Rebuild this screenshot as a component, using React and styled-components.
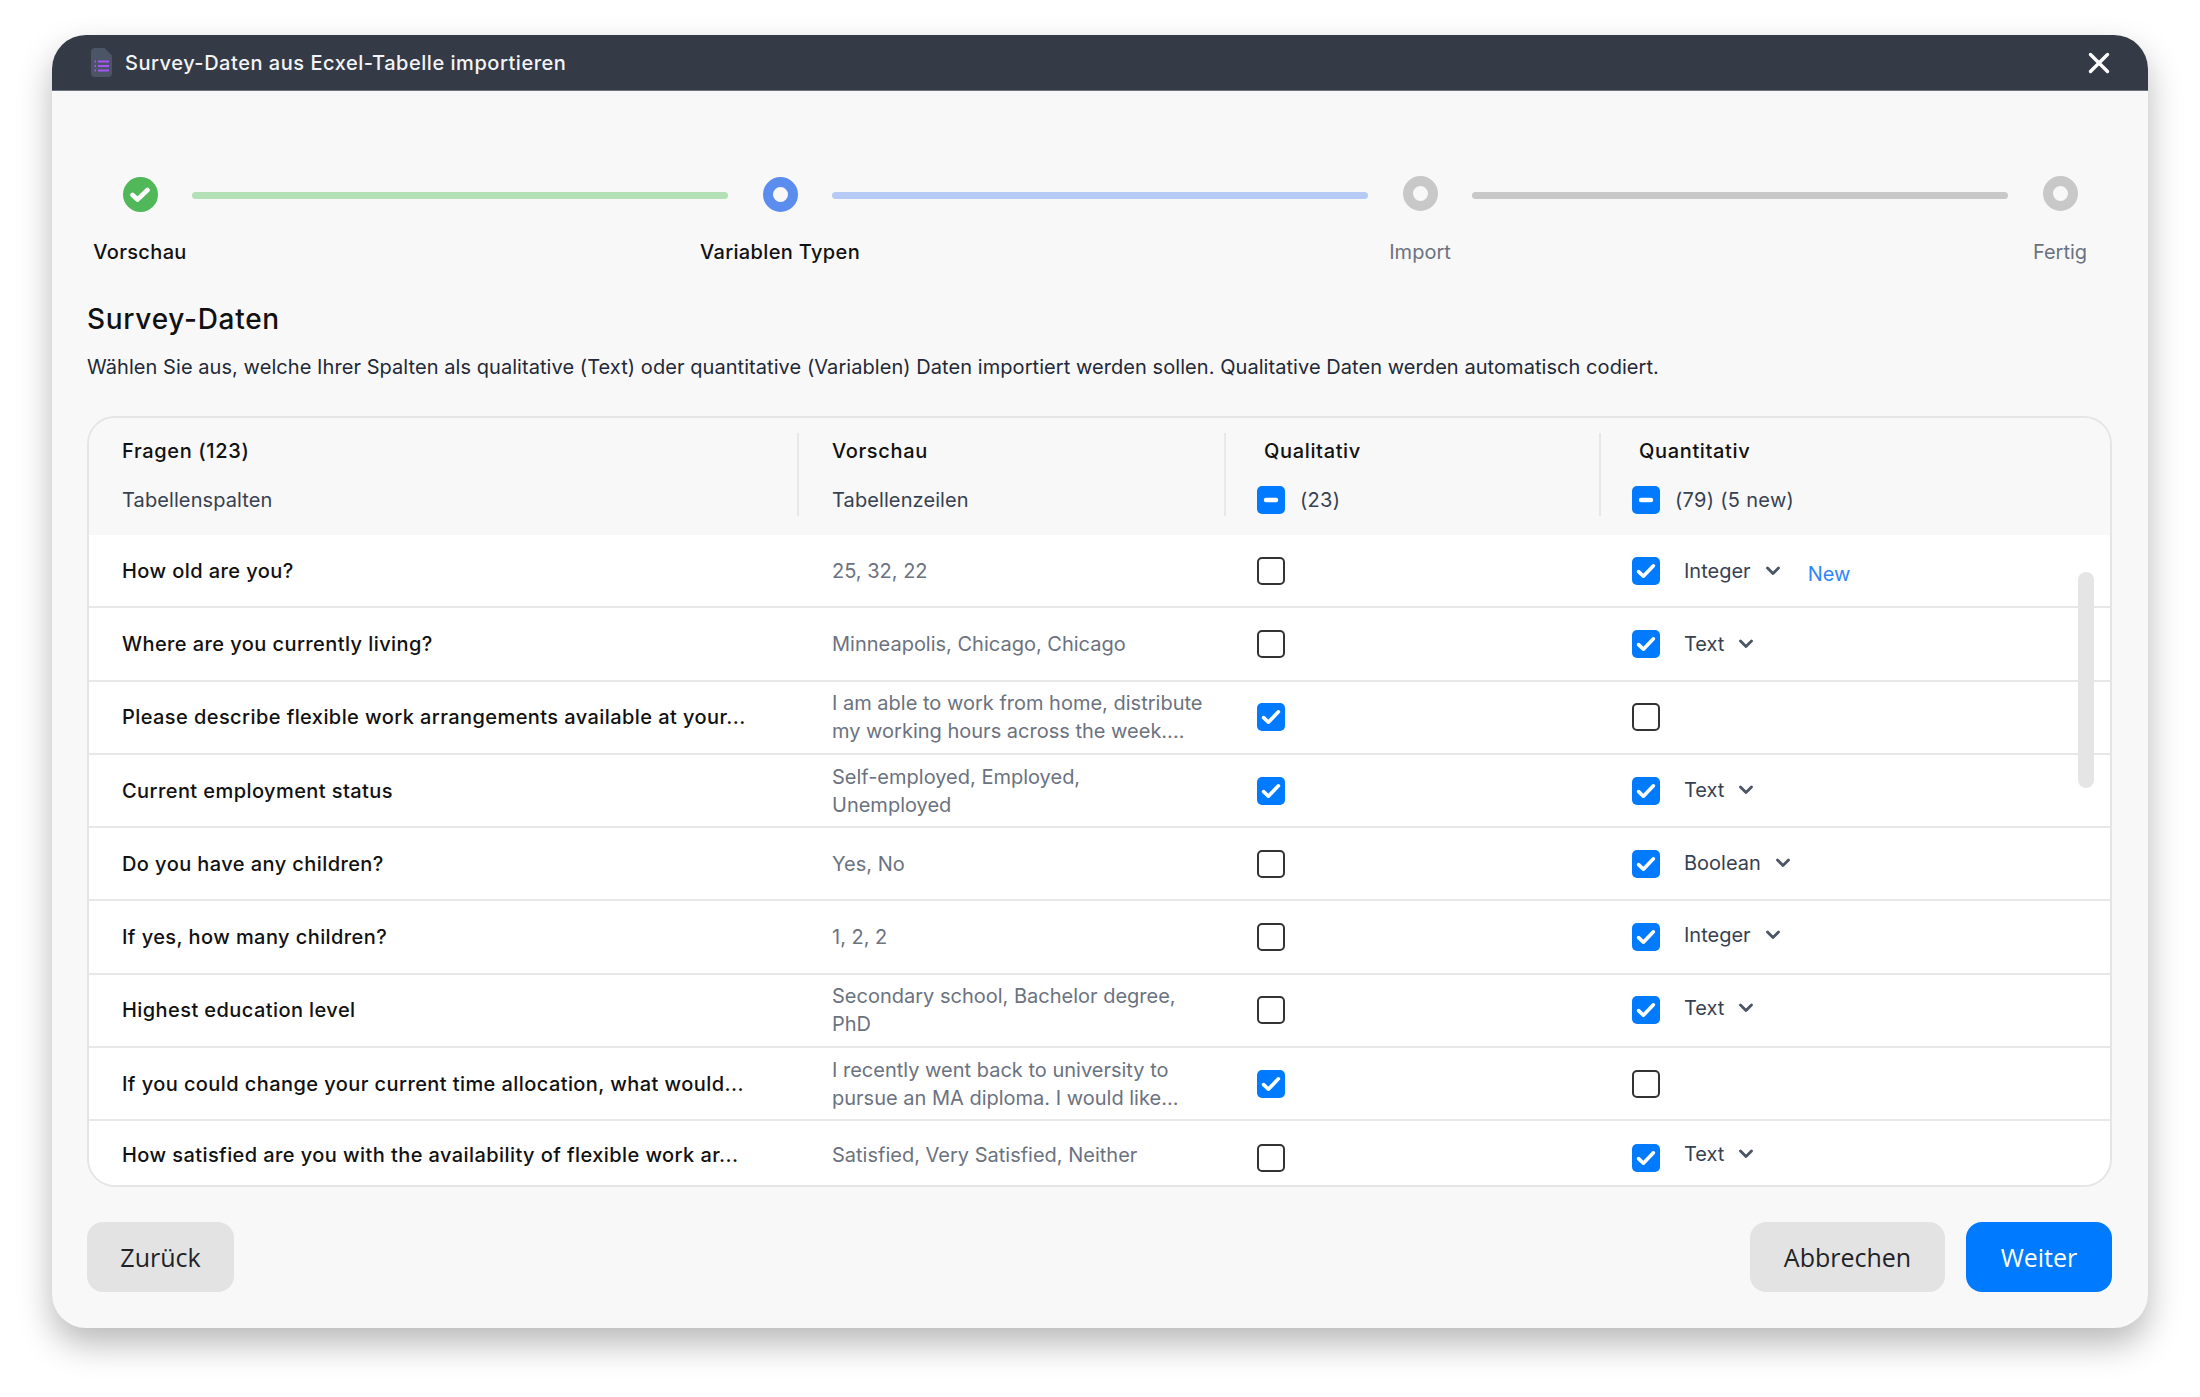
import React from "react";
import styled, { createGlobalStyle } from "styled-components";

const Global = createGlobalStyle`
  html, body { margin: 0; padding: 0; background: #fff; }
  body { font-family: Inter, "Liberation Sans", sans-serif; color: #111; -webkit-font-smoothing: antialiased; }
  * { box-sizing: border-box; }
`;

const Page = styled.div`
  width: 2200px;
  height: 1397px;
  padding: 35px 52px 69px;
  overflow: hidden;
`;
const Modal = styled.div`
  width: 2096px;
  height: 1293px;
  border-radius: 34px;
  background: #f8f8f8;
  box-shadow: 0 16px 34px rgba(0, 0, 0, 0.28);
  overflow: hidden;
  display: flex;
  flex-direction: column;
`;
const TitleBar = styled.header`
  height: 56px;
  flex: none;
  background: #343a46;
  border-bottom: 1px solid #6b7280;
  display: flex;
  align-items: center;
  padding: 0 38px 0 39px;
  gap: 13px;
`;
const TitleText = styled.div`
  color: #f3f4f6;
  font-size: 20px;
  font-weight: 500;
  letter-spacing: 0.53px;
  line-height: 28px;
  flex: 1;
`;
const Body = styled.main`
  flex: 1;
  padding: 86px 36px 36px 35px;
  display: flex;
  flex-direction: column;
`;
const Stepper = styled.div`
  display: flex;
  align-items: flex-start;
  padding: 0 34.5px 0 35.5px;
  height: 99px;
`;
const Step = styled.div`
  width: 35px;
  flex: none;
  display: flex;
  flex-direction: column;
  align-items: center;
  gap: 26px;
`;
const Dot = styled.div`
  width: 35px;
  height: 35px;
  border-radius: 50%;
  border: 10px solid ${(p) => p.$color};
  margin-top: ${(p) => (p.$raised ? "-1px" : "0")};
  margin-bottom: ${(p) => (p.$raised ? "1px" : "0")};
  background: #f8f8f8;
`;
const DoneDot = styled.div`
  width: 35px;
  height: 35px;
  border-radius: 50%;
  background: #50b858;
  display: flex;
  align-items: center;
  justify-content: center;
`;
const StepLabel = styled.div`
  font-size: 20px;
  line-height: 28px;
  font-weight: ${(p) => (p.$active ? 500 : 400)};
  letter-spacing: ${(p) => (p.$active ? "0.35px" : "0")};
  color: ${(p) => (p.$active ? "#111" : "#6b7280")};
  white-space: nowrap;
`;
const Connector = styled.div`
  flex: 1;
  height: 7px;
  border-radius: 4px;
  margin: 15px 34.5px 0;
  background: ${(p) => p.$color};
`;
const Heading = styled.h1`
  margin: 26px 0 0;
  font-size: 28px;
  line-height: 34px;
  font-weight: 500;
  letter-spacing: 0.72px;
  color: #111;
`;
const Description = styled.p`
  margin: 17px 0 0;
  font-size: 20px;
  line-height: 28px;
  letter-spacing: 0.06px;
  color: #1f2937;
`;
const Table = styled.section`
  margin-top: 35px;
  height: 771px;
  flex: none;
  border: 2px solid #e5e5e5;
  border-radius: 28px;
  overflow: hidden;
  position: relative;
  display: flex;
  flex-direction: column;
`;
const cols = "708px 427px 375px 1fr";
const HeadRow = styled.div`
  display: grid;
  grid-template-columns: ${cols};
  height: 117px;
  flex: none;
  padding: 15px 0 19px;
  background: #f8f8f8;
`;
const HeadCell = styled.div`
  padding: 4px 0 0 ${(p) => p.$pad}px;
  border-left: ${(p) => (p.$line ? "2px solid #e8e8e8" : "0")};
  display: flex;
  flex-direction: column;
  gap: 21px;
`;
const HeadTitle = styled.div`
  font-size: 20px;
  line-height: 28px;
  font-weight: 500;
  letter-spacing: 0.65px;
  padding-left: ${(p) => p.$indent || 0}px;
  color: #111;
`;
const HeadSub = styled.div`
  font-size: 20px;
  line-height: 28px;
  letter-spacing: ${(p) => (p.$spaced ? "0.3px" : "0.1px")};
  color: #374151;
  display: flex;
  align-items: center;
  gap: 15px;
`;
const Rows = styled.div`
  flex: 1;
  background: #fff;
  overflow: hidden;
`;
const Row = styled.div`
  display: grid;
  grid-template-columns: ${cols};
  height: 73.3px;
  align-items: center;
  border-bottom: 2px solid #e8e8e8;
  &:last-child { border-bottom: 0; }
`;
const Question = styled.div`
  padding-left: 33px;
  margin-bottom: ${(p) => p.$lift || 0}px;
  font-size: 20px;
  line-height: 28px;
  font-weight: 500;
  letter-spacing: 0.42px;
  color: #111;
  white-space: nowrap;
`;
const Preview = styled.div`
  padding: 0 20px 0 35px;
  margin-bottom: ${(p) => p.$lift || 0}px;
  font-size: 20px;
  line-height: 28px;
  color: #6b7280;
`;
const CheckCell = styled.div`
  padding-left: ${(p) => p.$pad}px;
  display: flex;
  align-items: center;
`;
const Box = styled.div`
  width: 28px;
  height: 28px;
  flex: none;
  border-radius: 5px;
  display: flex;
  align-items: center;
  justify-content: center;
  background: ${(p) => (p.$on ? "#007aff" : "#fff")};
  border: ${(p) => (p.$on ? "0" : "2px solid #333")};
`;
const TypeSelect = styled.div`
  display: flex;
  align-items: center;
  gap: 15px;
  margin-left: 24px;
  margin-bottom: ${(p) => p.$lift || 0}px;
  font-size: 20px;
  line-height: 28px;
  color: #374151;
`;
const NewTag = styled.span`
  margin-left: 28px;
  margin-top: 7px;
  font-size: 20px;
  line-height: 28px;
  color: #2f86f6;
`;
const Thumb = styled.div`
  position: absolute;
  right: 16px;
  top: 154px;
  width: 16px;
  height: 216px;
  border-radius: 8px;
  background: #e5e5e5;
`;
const Footer = styled.footer`
  margin-top: 35px;
  display: flex;
  justify-content: space-between;
  align-items: center;
`;
const Group = styled.div`
  display: flex;
  gap: 21px;
`;
const Button = styled.button`
  height: 70px;
  width: ${(p) => p.$w}px;
  border: 0;
  border-radius: 16px;
  padding: 0;
  font-family: "Open Sans", "Noto Sans", sans-serif;
  font-size: 25px;
  background: ${(p) => (p.$primary ? "#007aff" : "#e3e3e3")};
  color: ${(p) => (p.$primary ? "#fff" : "#1f2328")};
`;

const DocIcon = () => (
  <svg width="21" height="29" viewBox="0 0 21 29">
    <path d="M4 0H13.5L21 7.5V25a4 4 0 0 1-4 4H4a4 4 0 0 1-4-4V4a4 4 0 0 1 4-4Z" fill="#4b5565" />
    <path d="M7 13.5H18M7 18H18M7 22.5H18" stroke="#a855f7" strokeWidth="2" />
    <path d="M3.5 13.5H5M3.5 18H5M3.5 22.5H5" stroke="#a855f7" strokeWidth="2" />
  </svg>
);
const CloseIcon = () => (
  <svg width="22" height="22" viewBox="0 0 22 22">
    <path d="M2.5 2.5L19.5 19.5M19.5 2.5L2.5 19.5" stroke="#fff" strokeWidth="3.4" strokeLinecap="round" />
  </svg>
);
const StepCheck = () => (
  <svg width="21" height="21" viewBox="0 0 21 21">
    <path d="M2.5 11L7.5 15.5L17.5 6" fill="none" stroke="#fff" strokeWidth="4.6" strokeLinecap="round" strokeLinejoin="round" />
  </svg>
);
const Tick = () => (
  <svg width="28" height="28" viewBox="0 0 28 28">
    <path d="M6.6 14.6L11.4 19.2L21.4 8.8" fill="none" stroke="#fff" strokeWidth="3.6" strokeLinecap="round" strokeLinejoin="round" />
  </svg>
);
const Dash = () => (
  <svg width="28" height="28" viewBox="0 0 28 28">
    <path d="M9 14H19" stroke="#fff" strokeWidth="4.4" strokeLinecap="round" />
  </svg>
);
const Chevron = () => (
  <svg width="14" height="10" viewBox="0 0 14 10">
    <path d="M1.5 2L7 7.6L12.5 2" fill="none" stroke="#4b5563" strokeWidth="2.8" strokeLinecap="round" strokeLinejoin="round" />
  </svg>
);

const data = [
  { q: "How old are you?", p: "25, 32, 22", a: false, b: true, t: "Integer", isNew: true },
  { q: "Where are you currently living?", p: "Minneapolis, Chicago, Chicago", a: false, b: true, t: "Text" },
  { q: "Please describe flexible work arrangements available at your...", p: "I am able to work from home, distribute my working hours across the week....", a: true, b: false },
  { q: "Current employment status", p: "Self-employed, Employed, Unemployed", a: true, b: true, t: "Text", lift: 2 },
  { q: "Do you have any children?", p: "Yes, No", a: false, b: true, t: "Boolean", lift: 2 },
  { q: "If yes, how many children?", p: "1, 2, 2", a: false, b: true, t: "Integer", lift: 5 },
  { q: "Highest education level", p: "Secondary school, Bachelor degree, PhD", a: false, b: true, t: "Text", lift: 5 },
  { q: "If you could change your current time allocation, what would...", p: "I recently went back to university to pursue an MA diploma. I would like...", a: true, b: false },
  { q: "How satisfied are you with the availability of flexible work ar...", p: "Satisfied, Very Satisfied, Neither", a: false, b: true, t: "Text", lift: 8, textLift: 6 },
];

export default function App() {
  return (
    <Page>
      <Global />
      <Modal>
        <TitleBar>
          <DocIcon />
          <TitleText>Survey-Daten aus Ecxel-Tabelle importieren</TitleText>
          <CloseIcon />
        </TitleBar>
        <Body>
          <Stepper>
            <Step>
              <DoneDot><StepCheck /></DoneDot>
              <StepLabel $active>Vorschau</StepLabel>
            </Step>
            <Connector $color="#b4e0b6" />
            <Step>
              <Dot $color="#5b8def" />
              <StepLabel $active>Variablen Typen</StepLabel>
            </Step>
            <Connector $color="#b5cbf5" />
            <Step>
              <Dot $color="#c8c8c8" $raised />
              <StepLabel>Import</StepLabel>
            </Step>
            <Connector $color="#c8c8c8" />
            <Step>
              <Dot $color="#c8c8c8" $raised />
              <StepLabel>Fertig</StepLabel>
            </Step>
          </Stepper>
          <Heading>Survey-Daten</Heading>
          <Description>
            Wählen Sie aus, welche Ihrer Spalten als qualitative (Text) oder quantitative (Variablen) Daten importiert werden sollen. Qualitative Daten werden automatisch codiert.
          </Description>
          <Table>
            <HeadRow>
              <HeadCell $pad={33}>
                <HeadTitle>Fragen (123)</HeadTitle>
                <HeadSub>Tabellenspalten</HeadSub>
              </HeadCell>
              <HeadCell $pad={33} $line>
                <HeadTitle>Vorschau</HeadTitle>
                <HeadSub>Tabellenzeilen</HeadSub>
              </HeadCell>
              <HeadCell $pad={31} $line>
                <HeadTitle $indent={7}>Qualitativ</HeadTitle>
                <HeadSub $spaced><Box $on><Dash /></Box>(23)</HeadSub>
              </HeadCell>
              <HeadCell $pad={31} $line>
                <HeadTitle $indent={7}>Quantitativ</HeadTitle>
                <HeadSub $spaced><Box $on><Dash /></Box>(79) (5 new)</HeadSub>
              </HeadCell>
            </HeadRow>
            <Rows>
              {data.map((r) => (
                <Row key={r.q}>
                  <Question $lift={r.textLift}>{r.q}</Question>
                  <Preview $lift={r.textLift}>{r.p}</Preview>
                  <CheckCell $pad={33}>
                    <Box $on={r.a}>{r.a && <Tick />}</Box>
                  </CheckCell>
                  <CheckCell $pad={33}>
                    <Box $on={r.b}>{r.b && <Tick />}</Box>
                    {r.t && (
                      <TypeSelect $lift={r.lift}>
                        {r.t}
                        <Chevron />
                      </TypeSelect>
                    )}
                    {r.isNew && <NewTag>New</NewTag>}
                  </CheckCell>
                </Row>
              ))}
            </Rows>
            <Thumb />
          </Table>
          <Footer>
            <Button $w={147}>Zurück</Button>
            <Group>
              <Button $w={195}>Abbrechen</Button>
              <Button $w={146} $primary>Weiter</Button>
            </Group>
          </Footer>
        </Body>
      </Modal>
    </Page>
  );
}
